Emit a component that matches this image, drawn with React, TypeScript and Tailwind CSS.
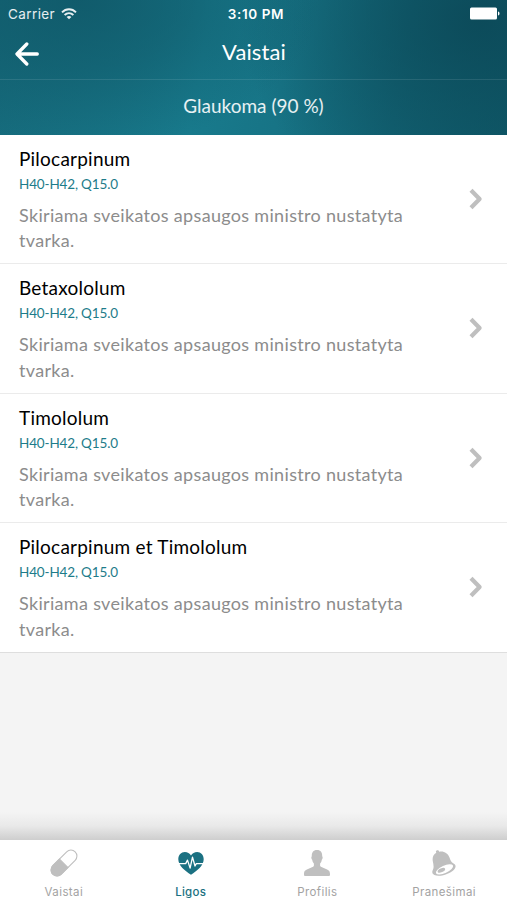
import { ReactNode } from 'react';

interface Medicine {
  name: string;
  codes: string;
  description: string;
}

const DESCRIPTION = 'Skiriama sveikatos apsaugos ministro nustatyta tvarka.';

const medicines: Medicine[] = [
  { name: 'Pilocarpinum', codes: 'H40-H42, Q15.0', description: DESCRIPTION },
  { name: 'Betaxololum', codes: 'H40-H42, Q15.0', description: DESCRIPTION },
  { name: 'Timololum', codes: 'H40-H42, Q15.0', description: DESCRIPTION },
  { name: 'Pilocarpinum et Timololum', codes: 'H40-H42, Q15.0', description: DESCRIPTION },
];

function WifiIcon() {
  return (
    <svg width="16" height="12" viewBox="0 0 16 12" fill="none" stroke="currentColor" strokeWidth="1.9">
      <path d="M1 4.3C5 .2 11 .2 15 4.3" />
      <path d="M3.6 7c2.6-2.5 6.2-2.5 8.8 0" />
      <path d="M8 11.3 5.6 8.9c1.4-1.3 3.4-1.3 4.8 0Z" fill="currentColor" stroke="none" />
    </svg>
  );
}

function BatteryIcon() {
  return (
    <svg width="30" height="13" viewBox="0 0 30 13" fill="currentColor">
      <rect x="0" y="0.5" width="27" height="12" rx="1.5" />
      <path d="M28 4.5c2 .4 2 3.6 0 4Z" />
    </svg>
  );
}

function BackIcon() {
  return (
    <svg width="24" height="24" viewBox="0 0 24 24" fill="none" stroke="currentColor" strokeWidth="3.3" strokeLinecap="round" strokeLinejoin="round">
      <path d="M11.8 2 2 12l9.8 10M2.5 12h19.8" />
    </svg>
  );
}

function ChevronIcon() {
  return (
    <svg width="14" height="22" viewBox="0 0 14 22" fill="none" stroke="currentColor" strokeWidth="4.2" strokeLinejoin="round">
      <path d="m2 2.2 8.6 8.8L2 19.8" />
    </svg>
  );
}

function PillIcon() {
  return (
    <svg width="28" height="28" viewBox="0 0 28 28" fill="none" stroke="currentColor" strokeWidth="1.1">
      <g transform="rotate(-45 14 14)">
        <rect x="-1.8" y="8" width="31.6" height="12" rx="6" />
        <path d="M13.5 8H4.2a6 6 0 0 0 0 12h9.3Z" fill="currentColor" />
      </g>
    </svg>
  );
}

function HeartIcon() {
  return (
    <svg width="28" height="28" viewBox="0 0 28 28" fill="none">
      <path
        d="M14 25.8C8 21.7 1.3 16.6 1.3 10.2 1.3 6 4.2 3 7.8 3c2.7 0 4.9 1.3 6.2 3.5C15.3 4.3 17.5 3 20.2 3c3.6 0 6.5 3 6.5 7.2 0 6.4-6.7 11.5-12.7 15.6Z"
        fill="currentColor"
      />
      <path d="M0 14.6h8.7l1.8-3.5 2.6 8 2.4-11 2.5 8.900 1.300-2.400H28" stroke="white" strokeWidth="1.3" strokeLinejoin="round" />
    </svg>
  );
}

function ProfileIcon() {
  return (
    <svg width="28" height="28" viewBox="0 0 28 28" fill="currentColor">
      <path d="M14 1c3.8 0 5.400 2.600 5.200 6.300.8.600.5 2.700-.4 3.400-.3 1.800-.8 2.900-1.700 3.900v2.200c.5 1.300 3 2 5.300 2.900 3.400 1.200 4.600 2.300 4.600 5.300v1.100c0 .5-.4.900-.9.900H1.900c-.5 0-.9-.4-.9-.9V25c0-3 1.200-4.100 4.600-5.300 2.300-.9 4.800-1.600 5.300-2.900v-2.200c-.9-1-1.400-2.100-1.700-3.900-.9-.7-1.200-2.800-.4-3.400C8.600 3.600 10.200 1 14 1Z" />
    </svg>
  );
}

function BellIcon() {
  return (
    <svg width="28" height="28" viewBox="0 0 28 28">
      <path
        d="M6.300 1.700c1.500-.8 2.400-.2 2.900 1 4.800-.9 8.800 1.700 10.300 5.800 1 2.900 1.600 4.700 3.700 5.800 2.300 1.200 3.100 2.800 1.700 5.200-2.900 4.800-15 9.200-20.500 6.600-2.500-1.300-2.500-3.300-1.500-5.300 1.300-2.500.5-5.200-.1-8.500-.6-3.700.4-7 3.500-8.600-.4-.9-.7-1.400 0-2Z"
        fill="currentColor"
      />
      <ellipse cx="14.5" cy="20.4" rx="9.300" ry="3.700" transform="rotate(-24 14.5 20.4)" fill="white" />
      <ellipse cx="11.4" cy="21.300" rx="4" ry="1.900" transform="rotate(-24 11.4 21.3)" fill="currentColor" />
    </svg>
  );
}

function MedicineRow({ medicine, last }: { medicine: Medicine; last: boolean }) {
  return (
    <li className={`flex h-[129.5px] items-center border-b-[1.5px] ${last ? 'border-[#dedede]' : 'border-[#ebebeb]'} bg-white pl-[19px] pr-6`}>
      <div className="w-[410px] pt-[3px]">
        <h2 className="text-[19px] leading-6 tracking-[0.23px] text-black">{medicine.name}</h2>
        <p className="mt-px text-[13.5px] leading-6 tracking-[-0.15px] text-[#1d7c8a]">{medicine.codes}</p>
        <p className="mt-[7px] text-[18px] leading-[25.3px] tracking-[0.32px] text-[#8c8c8c]">{medicine.description}</p>
      </div>
      <span className="ml-auto text-[#bfbfbf]">
        <ChevronIcon />
      </span>
    </li>
  );
}

function TabItem({ icon, label, active = false }: { icon: ReactNode; label: string; active?: boolean }) {
  return (
    <button className={`flex flex-1 flex-col items-center pl-px pt-[9px] ${active ? 'text-[#1b7182]' : 'text-[#bfbfbf]'}`}>
      {icon}
      <span className={`mt-[7px] font-[Inter,sans-serif] text-[11.5px] leading-4 ${active ? 'font-medium tracking-[0.25px]' : 'tracking-[0.4px] text-[#a3a3a3]'}`}>
        {label}
      </span>
    </button>
  );
}

export default function App() {
  return (
    <div className="flex h-[900px] w-[507px] flex-col overflow-hidden bg-[#f4f4f4] font-[Lato,sans-serif]">
      {/* Header */}
      <header className="h-[134.5px] bg-[radial-gradient(ellipse_240px_150px_at_80px_0px,#0f5666cc_0%,#0f566680_45%,transparent_100%),radial-gradient(ellipse_240px_200px_at_480px_20px,#0b4655cc_0%,#0c4a5980_45%,transparent_100%),linear-gradient(100deg,#166b7c_0%,#187a8c_40%,#177486_56%,#126475_78%,#0f5b6b_100%)] text-white">
        <div className="grid h-[27px] grid-cols-3 items-center pl-2 pr-[7px] font-[Inter,sans-serif] text-[13.5px]">
          <div className="flex items-center gap-1.5 pt-px tracking-[0.4px] text-white/90">
            <span>Carrier</span>
            <WifiIcon />
          </div>
          <span className="pl-1 pt-px text-center font-semibold tracking-[0.6px]">3:10 PM</span>
          <span className="justify-self-end">
            <BatteryIcon />
          </span>
        </div>
        <div className="grid h-[53px] grid-cols-[60px_1fr_60px] items-center border-b border-white/10">
          <button className="pl-[15px] pt-px" aria-label="Atgal">
            <BackIcon />
          </button>
          <h1 className="pb-0.5 pl-px text-center text-[22px] leading-none tracking-[0.1px]">Vaistai</h1>
        </div>
        <div className="flex h-[54px] items-center justify-center pb-0.5 text-[19px] text-white/90">
          Glaukoma (90 %)
        </div>
      </header>

      {/* Medicine list */}
      <ul>
        {medicines.map((medicine, index) => (
          <MedicineRow key={medicine.name} medicine={medicine} last={index === medicines.length - 1} />
        ))}
      </ul>

      {/* Tab bar */}
      <div className="mt-auto h-7 bg-linear-to-b from-[#f4f4f4] via-[#e9e9e9] to-[#cecece]" />
      <nav className="flex h-[60px] bg-white">
        <TabItem icon={<PillIcon />} label="Vaistai" />
        <TabItem icon={<HeartIcon />} label="Ligos" active />
        <TabItem icon={<ProfileIcon />} label="Profilis" />
        <TabItem icon={<BellIcon />} label="Pranešimai" />
      </nav>
    </div>
  );
}
